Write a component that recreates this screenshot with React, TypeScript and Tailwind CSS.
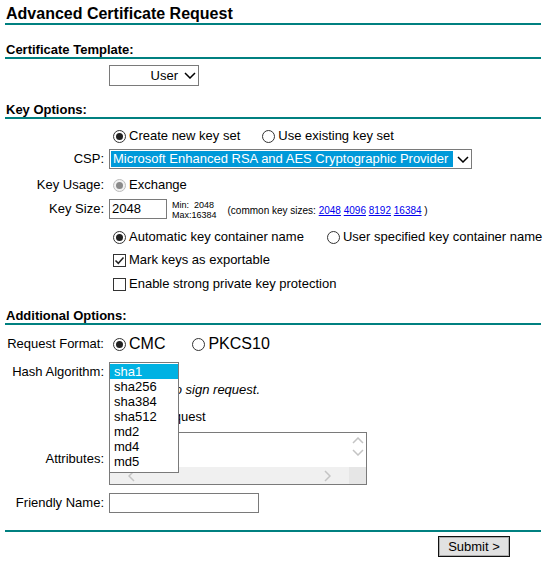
import type { ReactNode } from 'react';

const HASHES = ['sha1', 'sha256', 'sha384', 'sha512', 'md2', 'md4', 'md5'];

function Radio({ checked = false, disabled = false }: { checked?: boolean; disabled?: boolean }) {
  return (
    <span
      className={`ml-[4px] mr-[3px] w-[13px] h-[13px] shrink-0 rounded-full border flex items-center justify-center ${
        disabled ? 'border-[#bcbcbc] bg-[#f2f2f2]' : 'border-[#333333] bg-white'
      }`}
    >
      {checked && (
        <span className={`w-[7px] h-[7px] rounded-full ${disabled ? 'bg-[#8a8a8a]' : 'bg-[#222222]'}`} />
      )}
    </span>
  );
}

function Checkbox({ checked = false }: { checked?: boolean }) {
  return (
    <span className="ml-[4px] mr-[3px] w-[13px] h-[13px] shrink-0 border border-[#333333] bg-white flex items-center justify-center">
      {checked && (
        <svg width="11" height="11" viewBox="0 0 11 11">
          <path d="M1.5 5.5 L4.3 8.3 L9.5 2.5" fill="none" stroke="#222" strokeWidth="1.5" />
        </svg>
      )}
    </span>
  );
}

function Chevron({ dir = 'down', color = '#000', w = 12, h = 7 }: { dir?: string; color?: string; w?: number; h?: number }) {
  const d =
    dir === 'down'
      ? `M1 1 L${w / 2} ${h - 1} L${w - 1} 1`
      : dir === 'up'
      ? `M1 ${h - 1} L${w / 2} 1 L${w - 1} ${h - 1}`
      : dir === 'left'
      ? `M${w - 1} 1 L1 ${h / 2} L${w - 1} ${h - 1}`
      : `M1 1 L${w - 1} ${h / 2} L1 ${h - 1}`;
  return (
    <svg width={w} height={h} viewBox={`0 0 ${w} ${h}`}>
      <path d={d} fill="none" stroke={color} strokeWidth="1.5" />
    </svg>
  );
}

function SectionHead({ children, className = '' }: { children: ReactNode; className?: string }) {
  return (
    <div className={`border-b-2 border-[#008080] font-bold text-[13px] leading-[15px] pl-[1px] ${className}`}>
      {children}
    </div>
  );
}

function Row({ label = '', className = '', children }: { label?: string; className?: string; children?: ReactNode }) {
  return (
    <div className={`flex items-center ${className}`}>
      <div className="w-[99px] shrink-0 text-right whitespace-nowrap">{label}</div>
      <div className="ml-[5px] flex items-center whitespace-nowrap h-full">{children}</div>
    </div>
  );
}

export default function App() {
  return (
    <div className="w-[551px] h-[573px] bg-white pl-[5px] text-[13px] text-black font-['Liberation_Sans',Arial,sans-serif] overflow-hidden">
      <div className="w-[536px] flex flex-col">
        <div className="border-b-2 border-[#008080] font-bold text-[16px] leading-[19px] pt-[4px] pl-[1px]">
          Advanced Certificate Request
        </div>

        <SectionHead className="mt-[17px]">Certificate Template:</SectionHead>
        <Row className="mt-[6px] h-[21px]">
          <div className="w-[90px] h-[21px] border border-[#7a7a7a] flex items-center justify-end">
            <span className="pr-[3px]">User</span>
            <span className="w-[17px] flex justify-center">
              <Chevron />
            </span>
          </div>
        </Row>

        <SectionHead className="mt-[16px]">Key Options:</SectionHead>
        <Row className="mt-[7px] h-[20px]">
          <Radio checked />
          <span>Create new key set</span>
          <span className="ml-[18px] flex items-center">
            <Radio />
            <span>Use existing key set</span>
          </span>
        </Row>
        <Row label="CSP:" className="mt-[3px] h-[20px]">
          <div className="w-[363px] h-[20px] border border-[#7a7a7a] flex items-stretch">
            <span className="flex-1 m-[1px] bg-[#0099d9] text-white pl-[2px] leading-[16px]">
              Microsoft Enhanced RSA and AES Cryptographic Provider
            </span>
            <span className="w-[17px] flex items-center justify-center">
              <Chevron />
            </span>
          </div>
        </Row>
        <Row label="Key Usage:" className="mt-[6px] h-[20px]">
          <Radio checked disabled />
          <span>Exchange</span>
        </Row>
        <Row label="Key Size:" className="mt-[4px] h-[20px]">
          <div className="w-[58px] h-[20px] border border-[#7a7a7a] pl-[2px] leading-[18px]">2048</div>
          <div className="ml-[5px] text-[9px] leading-[10px] pt-[1px]">
            <div>Min:&nbsp; 2048</div>
            <div>Max:16384</div>
          </div>
          <div className="ml-[11px] text-[10px] pt-[2px]">
            (common key sizes: <span className="text-[#0000ee] underline">2048</span>{' '}
            <span className="text-[#0000ee] underline">4096</span>{' '}
            <span className="text-[#0000ee] underline">8192</span>{' '}
            <span className="text-[#0000ee] underline">16384</span> )
          </div>
        </Row>
        <Row className="mt-[8px] h-[20px]">
          <Radio checked />
          <span>Automatic key container name</span>
          <span className="ml-[19px] flex items-center">
            <Radio />
            <span>User specified key container name</span>
          </span>
        </Row>
        <Row className="mt-[3px] h-[20px]">
          <Checkbox checked />
          <span>Mark keys as exportable</span>
        </Row>
        <Row className="mt-[4px] h-[20px]">
          <Checkbox />
          <span>Enable strong private key protection</span>
        </Row>

        <SectionHead className="mt-[14px]">Additional Options:</SectionHead>
        <Row label="Request Format:" className="mt-[9px] h-[20px]">
          <Radio checked />
          <span className="text-[16px]">CMC</span>
          <span className="ml-[23px] flex items-center">
            <Radio />
            <span className="text-[16px]">PKCS10</span>
          </span>
        </Row>
        <Row label="Hash Algorithm:" className="mt-[8px] h-[20px]">
          <div className="relative w-[70px] h-[20px] border border-[#7a7a7a]">
            {/* open listbox */}
            <div className="absolute left-[-1px] top-[-1px] z-10 w-[70px] h-[111px] border border-[#7a7a7a] bg-white pt-[1px]">
              {HASHES.map((h, i) => (
                <div
                  key={h}
                  className={`h-[15px] leading-[15px] pl-[4px] ${i === 0 ? 'bg-[#00b2e3] text-white' : ''}`}
                >
                  {h}
                </div>
              ))}
            </div>
          </div>
        </Row>
        <Row className="h-[16px]">
          <span className="italic">Only used to sign request.</span>
        </Row>
        <Row className="mt-[9px] h-[20px]">
          <Checkbox />
          <span>Save request</span>
        </Row>
        <Row label="Attributes:" className="mt-[5px] h-[53px]">
          <div className="w-[258px] h-[53px] border border-[#7a7a7a] bg-white flex flex-col">
            <div className="flex-1 flex">
              <div className="flex-1" />
              <div className="w-[17px] flex flex-col items-center pt-[4px] gap-[5px]">
                <Chevron dir="up" color="#c4c4c4" />
                <Chevron dir="down" color="#c4c4c4" />
              </div>
            </div>
            <div className="h-[17px] flex">
              <div className="flex-1 bg-[#f0f0f0] flex items-center justify-between pl-[18px] pr-[18px]">
                <Chevron dir="left" color="#c4c4c4" w={7} h={12} />
                <Chevron dir="right" color="#c4c4c4" w={7} h={12} />
              </div>
              <div className="w-[17px] bg-[#e6e6e6]" />
            </div>
          </div>
        </Row>
        <Row label="Friendly Name:" className="mt-[8px] h-[20px]">
          <div className="w-[150px] h-[20px] border border-[#7a7a7a]" />
        </Row>

        <div className="mt-[17px] border-t-2 border-[#008080]" />
        <div className="mt-[4px] flex justify-end pr-[31px]">
          <button className="w-[72px] h-[21px] border border-[#111111] bg-[#e1e1e1] shadow-[inset_0_0_0_1px_#adadad] text-[13px] leading-[17px]">
            Submit &gt;
          </button>
        </div>
      </div>
    </div>
  );
}
